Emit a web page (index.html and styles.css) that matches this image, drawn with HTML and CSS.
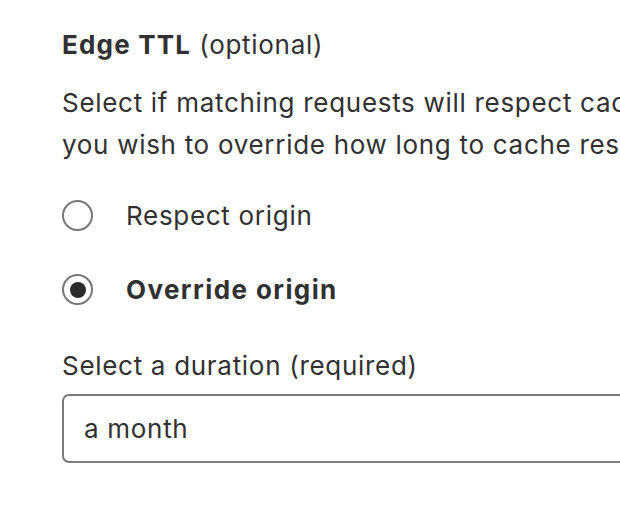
FILE: index.html
```html
<!DOCTYPE html>
<html>
<head>
<meta charset="utf-8">
<link rel="stylesheet" href="styles.css">
</head>
<body>
<div class="field">
  <div class="legend"><strong>Edge TTL</strong> (optional)</div>
  <p class="hint">Select if matching requests will respect caching headers from your origin, or if<br>you wish to override how long to cache resources.</p>
  <div class="radios">
    <label class="radio"><span class="dot"></span><span>Respect origin</span></label>
    <label class="radio checked"><span class="dot"></span><span>Override origin</span></label>
  </div>
  <div class="label">Select a duration (required)</div>
  <div class="select">a month</div>
</div>
</body>
</html>
```

FILE: styles.css
```css
html, body {
  margin: 0;
  padding: 0;
  background: #fff;
  overflow: hidden;
}
body {
  font-family: Inter, "Noto Sans", sans-serif;
  font-size: 26px;
  letter-spacing: 0.7px;
  color: #313131;
}
.field {
  padding: 28px 0 0 62px;
  width: 900px;
}
.legend {
  line-height: 34px;
}
.legend strong {
  font-weight: 700;
  letter-spacing: 1.2px;
}
.hint {
  margin: 20px 0 0;
  line-height: 42px;
  white-space: nowrap;
}
.radios {
  display: flex;
  flex-direction: column;
  gap: 43px;
  margin-top: 34px;
}
.radio {
  display: flex;
  align-items: center;
  gap: 33px;
  height: 31px;
}
.dot {
  width: 27px;
  height: 27px;
  border: 2px solid #777;
  border-radius: 50%;
  box-sizing: content-box;
  display: flex;
  align-items: center;
  justify-content: center;
  flex: none;
}
.checked .dot::after {
  content: "";
  width: 16px;
  height: 16px;
  border-radius: 50%;
  background: #2b2b2b;
}
.checked span:last-child {
  font-weight: 700;
  letter-spacing: 1.4px;
}
.label {
  margin-top: 44px;
  line-height: 34px;
}
.select {
  margin-top: 11px;
  width: 640px;
  height: 69px;
  box-sizing: border-box;
  border: 2px solid #7a7a7a;
  border-radius: 7px;
  padding: 0 20px;
  display: flex;
  align-items: center;
}
```
